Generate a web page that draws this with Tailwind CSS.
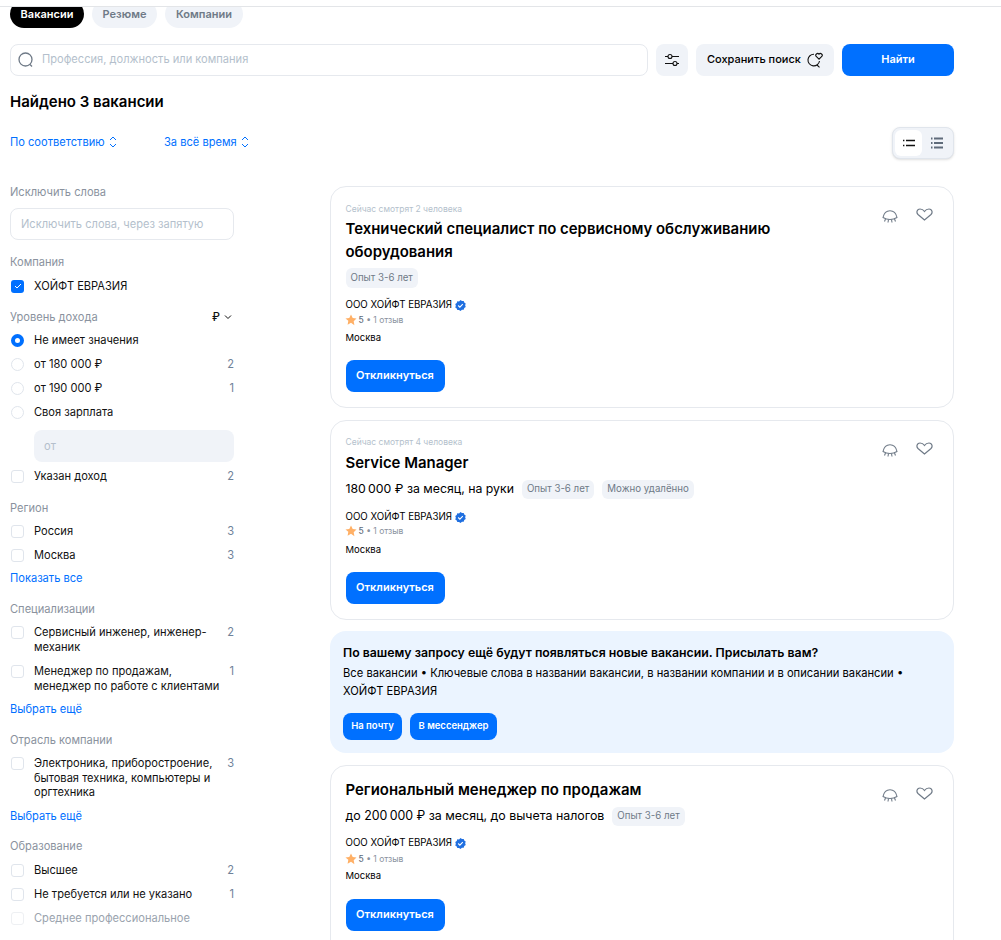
<!DOCTYPE html>
<html lang="ru">
<head>
  <meta charset="UTF-8">
  <meta name="viewport" content="width=device-width, initial-scale=1.0">
  <title>Вакансии</title>
  <script src="https://cdn.jsdelivr.net/npm/@tailwindcss/browser@4"></script>
</head>
<body class="bg-white h-[940px] overflow-hidden font-['Inter','Noto_Sans',sans-serif] text-black">
  <div class="h-[7px] border-b border-[#e3e5e8]"></div>

  <!-- Tabs, cut off by the top line -->
  <div class="h-[21px] overflow-hidden pl-[10px]">
    <div class="flex gap-2 -mt-[7px] text-[11px] font-semibold">
      <div class="h-[28px] w-[74px] rounded-full bg-black text-white flex items-center justify-center">Вакансии</div>
      <div class="h-[28px] w-[65px] rounded-full bg-[#f0f3f8] text-[#6f7a87] flex items-center justify-center">Резюме</div>
      <div class="h-[28px] w-[78px] rounded-full bg-[#f0f3f8] text-[#6f7a87] flex items-center justify-center">Компании</div>
    </div>
  </div>

  <!-- Search -->
  <div class="flex mt-4 ml-[10px] w-[944px] h-8 gap-2">
    <div class="w-[638px] rounded-lg border border-[#e6e9ee] flex items-center pl-[7px] pb-px text-[11.1px] text-[#b4bfcc]">
      <svg class="w-4 h-4 mr-2 mt-px" viewBox="0 0 16 16" fill="none" stroke="#6f7a87" stroke-width="1.3"><circle cx="7.5" cy="7.5" r="6.5"/><path d="M12 12.5l2 2"/></svg>
      Профессия, должность или компания
    </div>
    <div class="w-8 rounded-lg bg-[#f0f3f8] flex items-center justify-center">
      <svg class="w-4 h-4" viewBox="0 0 16 16" fill="none" stroke="#111" stroke-width="1.1"><path d="M1 4.5h3M8 4.5h7M1 11.5h8M13 11.5h2"/><circle cx="6" cy="4.5" r="2"/><circle cx="11" cy="11.5" r="2"/></svg>
    </div>
    <div class="w-[138px] rounded-lg bg-[#f0f3f8] flex items-center pl-[11px] pb-px text-[11px] font-medium">
      Сохранить поиск
      <svg class="w-[17px] h-4 ml-[5px] mt-px" viewBox="0 0 17 16" fill="none" stroke="#111" stroke-width="1.1"><path d="M8 2.300A5.800 5.800 0 1 0 13.500 9"/><path d="M11 13l2.500 2.300"/><path d="M13 7.200l-2.800-2.700a1.500 1.500 0 0 1 2.800-2.300 1.500 1.500 0 0 1 2.800 2.300z"/></svg>
    </div>
    <div class="w-[112px] rounded-lg bg-[#0070ff] text-white flex items-center justify-center pb-px text-[11px] font-semibold">Найти</div>
  </div>

  <h1 class="ml-[10px] mt-[15px] text-[15px] leading-[22px] font-semibold">Найдено 3 вакансии</h1>

  <!-- Sort -->
  <div class="flex items-center ml-[10px] w-[944px] h-8 mt-[14px] text-[11.1px] text-[#0070ff]">
    <div class="w-[154px] flex items-center gap-1 pb-[2px]">По соответствию
      <svg class="w-2 h-3" viewBox="0 0 8 12" fill="none" stroke="#0070ff"><path d="M1 4l3-3 3 3M1 8l3 3 3-3"/></svg>
    </div>
    <div class="flex items-center gap-1 pb-[2px]">За всё время
      <svg class="w-2 h-3" viewBox="0 0 8 12" fill="none" stroke="#0070ff"><path d="M1 4l3-3 3 3M1 8l3 3 3-3"/></svg>
    </div>
    <div class="ml-auto w-[62px] h-8 rounded-lg border border-[#e0e5ec] bg-[#f0f3f8] shadow-sm flex items-center pl-[2px]">
      <div class="w-[27px] h-[26px] rounded-md bg-white flex items-center justify-center">
        <svg class="w-3 h-2" viewBox="0 0 12 8" stroke="#111" stroke-width="1.5"><path d="M3 1.500h9M3 6.500h9M0 1.500h1.400M0 6.500h1.400"/></svg>
      </div>
      <div class="w-[29px] flex items-center justify-center">
        <svg class="w-3 h-3" viewBox="0 0 12 12" stroke="#5f6b7a" stroke-width="2"><path d="M3 1.500h9M3 6h9M3 10.500h9M0 1.500h1.500M0 6h1.500M0 10.500h1.500"/></svg>
      </div>
    </div>
  </div>

  <div class="flex items-start ml-[10px] w-[944px] mt-[25px]">
    <!-- Filters -->
    <aside class="w-[224px] shrink-0 text-[11.1px] text-[#111]">
      <div class="h-4 leading-4 text-[#8a929e]">Исключить слова</div>
      <div class="mt-2 h-8 rounded-lg border border-[#e6e9ee] flex items-center pl-[10px] text-[#b4bfcc]">Исключить слова, через запятую</div>

      <div class="mt-[14px] h-4 leading-4 text-[#8a929e]">Компания</div>
      <div class="mt-1 h-6 flex items-center">
        <div class="w-[13px] h-[13px] ml-px rounded-[3px] bg-[#0070ff] flex items-center justify-center">
          <svg class="w-2 h-2" viewBox="0 0 8 8" fill="none" stroke="#fff"><path d="M1 4l2 2 4-4"/></svg>
        </div>
        <span class="ml-[10px]">ХОЙФТ ЕВРАЗИЯ</span>
      </div>

      <div class="mt-[11px] h-4 leading-4 text-[#8a929e] flex items-center justify-between">Уровень дохода
        <span class="text-[#111] font-medium flex items-center gap-1 pr-[2px]">₽
          <svg class="w-2 h-2" viewBox="0 0 8 8" fill="none" stroke="#111"><path d="M1 2.500l3 3 3-3"/></svg>
        </span>
      </div>
      <div class="mt-[3px] h-6 flex items-center">
        <div class="w-[13px] h-[13px] ml-px rounded-full border-[4px] border-[#0070ff]"></div>
        <span class="ml-[10px]">Не имеет значения</span>
      </div>
      <div class="h-6 flex items-center">
        <div class="w-[13px] h-[13px] ml-px rounded-full border border-[#e0e5ec]"></div>
        <span class="ml-[10px]">от 180 000 ₽</span><span class="ml-auto text-[#6f8299]">2</span>
      </div>
      <div class="h-6 flex items-center">
        <div class="w-[13px] h-[13px] ml-px rounded-full border border-[#e0e5ec]"></div>
        <span class="ml-[10px]">от 190 000 ₽</span><span class="ml-auto text-[#6f8299]">1</span>
      </div>
      <div class="h-6 flex items-center">
        <div class="w-[13px] h-[13px] ml-px rounded-full border border-[#e0e5ec]"></div>
        <span class="ml-[10px]">Своя зарплата</span>
      </div>
      <div class="mt-[6px] ml-6 h-8 rounded-lg bg-[#f0f3f8] flex items-center pl-[10px] text-[#b4bfcc]">от</div>
      <div class="mt-[2px] h-6 flex items-center">
        <div class="w-[13px] h-[13px] ml-px rounded-[3px] border border-[#e0e5ec]"></div>
        <span class="ml-[10px]">Указан доход</span><span class="ml-auto text-[#6f8299]">2</span>
      </div>

      <div class="mt-3 h-4 leading-4 text-[#8a929e]">Регион</div>
      <div class="mt-[3px] h-6 flex items-center">
        <div class="w-[13px] h-[13px] ml-px rounded-[3px] border border-[#e0e5ec]"></div>
        <span class="ml-[10px]">Россия</span><span class="ml-auto text-[#6f8299]">3</span>
      </div>
      <div class="h-6 flex items-center">
        <div class="w-[13px] h-[13px] ml-px rounded-[3px] border border-[#e0e5ec]"></div>
        <span class="ml-[10px]">Москва</span><span class="ml-auto text-[#6f8299]">3</span>
      </div>
      <div class="mt-[3px] h-4 leading-4 text-[#0070ff]">Показать все</div>

      <div class="mt-[15px] h-4 leading-4 text-[#8a929e]">Специализации</div>
      <div class="mt-2 flex items-start leading-[15px]">
        <div class="w-[13px] h-[13px] mt-px ml-px rounded-[3px] border border-[#e0e5ec] shrink-0"></div>
        <span class="ml-[10px] w-[180px]">Сервисный инженер, инженер-механик</span><span class="ml-auto text-[#6f8299]">2</span>
      </div>
      <div class="mt-[9px] flex items-start leading-[15px]">
        <div class="w-[13px] h-[13px] mt-px ml-px rounded-[3px] border border-[#e0e5ec] shrink-0"></div>
        <span class="ml-[10px] w-[186px]">Менеджер по продажам, менеджер по работе с клиентами</span><span class="ml-auto text-[#6f8299]">1</span>
      </div>
      <div class="mt-[7px] h-4 leading-4 text-[#0070ff]">Выбрать ещё</div>

      <div class="mt-[15px] h-4 leading-4 text-[#8a929e]">Отрасль компании</div>
      <div class="mt-2 flex items-start leading-[14.5px]">
        <div class="w-[13px] h-[13px] mt-px ml-px rounded-[3px] border border-[#e0e5ec] shrink-0"></div>
        <span class="ml-[10px] w-[186px]">Электроника, приборостроение, бытовая техника, компьютеры и оргтехника</span><span class="ml-auto text-[#6f8299]">3</span>
      </div>
      <div class="mt-2 h-4 leading-4 text-[#0070ff]">Выбрать ещё</div>

      <div class="mt-[14px] h-4 leading-4 text-[#8a929e]">Образование</div>
      <div class="mt-[5px] h-6 flex items-center">
        <div class="w-[13px] h-[13px] ml-px rounded-[3px] border border-[#e0e5ec]"></div>
        <span class="ml-[10px]">Высшее</span><span class="ml-auto text-[#6f8299]">2</span>
      </div>
      <div class="h-6 flex items-center">
        <div class="w-[13px] h-[13px] ml-px rounded-[3px] border border-[#e0e5ec]"></div>
        <span class="ml-[10px]">Не требуется или не указано</span><span class="ml-auto text-[#6f8299]">1</span>
      </div>
      <div class="h-6 flex items-center">
        <div class="w-[13px] h-[13px] ml-px rounded-[3px] border border-[#eef0f3]"></div>
        <span class="ml-[10px] text-[#9aa3ae]">Среднее профессиональное</span>
      </div>
    </aside>

    <!-- Results -->
    <main class="w-[624px] ml-[96px] mt-[2px]">
      <article class="relative h-[222px] rounded-2xl border border-[#e6e9ee] pl-[14.5px] pr-[15px] pt-[16px]">
        <div class="text-[8.5px] leading-3 text-[#b4bfcc]">Сейчас смотрят 2 человека</div>
        <h2 class="mt-[2.5px] w-[470px] text-[14.95px] leading-[23px] font-semibold">Технический специалист по сервисному обслуживанию оборудования</h2>
        <div class="mt-[4.5px] w-fit h-[20px] px-[5px] rounded-md bg-[#f0f3f8] text-[9.7px] text-[#6f7a87] flex items-center">Опыт 3-6 лет</div>
        <div class="mt-[10px] h-[14px] flex items-center gap-[3px] text-[9.7px]">ООО ХОЙФТ ЕВРАЗИЯ
          <svg class="w-[11px] h-[11px]" viewBox="0 0 12 12"><path fill="#1f6fe0" d="M6 0l1.600 1.100 1.900-.1.600 1.800 1.600 1.100-.6 1.900.6 1.900-1.600 1.100-.6 1.800-1.900-.1L6 12l-1.600-1.100-1.900.1-.6-1.800L.3 8.100.9 6.200.3 4.300l1.600-1.100.6-1.800 1.900.1z"/><path fill="none" stroke="#fff" stroke-width="1.200" d="M3.500 6l1.800 1.800 3.200-3.300"/></svg>
        </div>
        <div class="mt-px h-[14px] flex items-center text-[8.5px] text-[#8a929e]">
          <svg class="w-3 h-3 -ml-px mr-[2px]" viewBox="0 0 12 12"><path fill="#ffb066" d="M6 .5l1.700 3.600 3.800.5-2.800 2.700.7 3.900L6 8.800l-3.400 1.900.7-3.900L.5 4.600l3.800-.5z"/></svg>
          <span class="text-[#5f6b7a] font-medium">5</span>&nbsp;• 1 отзыв
        </div>
        <div class="mt-[4px] h-[14px] leading-[14px] text-[9.5px]">Москва</div>
        <div class="mt-[15px] w-[99px] h-8 pb-[2px] rounded-lg bg-[#0070ff] text-white text-[11px] font-semibold flex items-center justify-center">Откликнуться</div>
        <div class="absolute top-[21px] right-[20px] flex items-start gap-[18px]">
          <svg class="w-4 h-[13px] mt-[2px]" viewBox="0 0 16 13" fill="none" stroke="#6f7a87" stroke-width="1.100"><path d="M1 7.500C2 3 5 .8 8 .8s6 2.200 7 6.700c-2 1.200-4.500 2-7 2s-5-.8-7-2z"/><path d="M3.500 9l-1 2.500M6.500 9.500l-.5 3M9.500 9.500l.5 3M12.500 9l1 2.500"/></svg>
          <svg class="w-[17px] h-[13px]" viewBox="0 0 17 13" fill="none" stroke="#6f7a87" stroke-width="1.200"><path d="M8.500 12L2 6.500C0 4.500 1 1 4 1c2 0 3.500 1 4.500 2.500C9.500 2 11 1 13 1c3 0 4 3.500 2 5.500z"/></svg>
        </div>
      </article>

      <article class="relative mt-3 h-[200px] rounded-2xl border border-[#e6e9ee] pl-[14.5px] pr-[15px] pt-[15px]">
        <div class="text-[8.5px] leading-3 text-[#b4bfcc]">Сейчас смотрят 4 человека</div>
        <h2 class="mt-[4px] text-[14.95px] leading-[23px] font-semibold">Service Manager</h2>
        <div class="mt-[5px] h-[19px] flex items-center text-[12.3px]">
          <span>180&thinsp;000 ₽ за месяц, на руки</span>
          <span class="ml-2 h-[19px] px-[5px] rounded-md bg-[#f0f3f8] text-[9.7px] text-[#6f7a87] flex items-center">Опыт 3-6 лет</span>
          <span class="ml-2 h-[19px] px-[5px] rounded-md bg-[#f0f3f8] text-[9.7px] text-[#6f7a87] flex items-center">Можно удалённо</span>
        </div>
        <div class="mt-[11px] h-[14px] flex items-center gap-[3px] text-[9.7px]">ООО ХОЙФТ ЕВРАЗИЯ
          <svg class="w-[11px] h-[11px]" viewBox="0 0 12 12"><path fill="#1f6fe0" d="M6 0l1.600 1.100 1.900-.1.600 1.800 1.600 1.100-.6 1.900.6 1.900-1.600 1.100-.6 1.800-1.900-.1L6 12l-1.600-1.100-1.900.1-.6-1.800L.3 8.100.9 6.200.3 4.300l1.600-1.100.6-1.800 1.900.1z"/><path fill="none" stroke="#fff" stroke-width="1.200" d="M3.500 6l1.800 1.800 3.200-3.300"/></svg>
        </div>
        <div class="h-[14px] flex items-center text-[8.5px] text-[#8a929e]">
          <svg class="w-3 h-3 -ml-px mr-[2px]" viewBox="0 0 12 12"><path fill="#ffb066" d="M6 .5l1.700 3.600 3.800.5-2.800 2.700.7 3.900L6 8.800l-3.400 1.900.7-3.900L.5 4.600l3.800-.5z"/></svg>
          <span class="text-[#5f6b7a] font-medium">5</span>&nbsp;• 1 отзыв
        </div>
        <div class="mt-[5px] h-[14px] leading-[14px] text-[9.5px]">Москва</div>
        <div class="mt-[15px] w-[99px] h-8 pb-[2px] rounded-lg bg-[#0070ff] text-white text-[11px] font-semibold flex items-center justify-center">Откликнуться</div>
        <div class="absolute top-[21px] right-[20px] flex items-start gap-[18px]">
          <svg class="w-4 h-[13px] mt-[2px]" viewBox="0 0 16 13" fill="none" stroke="#6f7a87" stroke-width="1.100"><path d="M1 7.500C2 3 5 .8 8 .8s6 2.200 7 6.700c-2 1.200-4.500 2-7 2s-5-.8-7-2z"/><path d="M3.500 9l-1 2.500M6.500 9.500l-.5 3M9.500 9.500l.5 3M12.500 9l1 2.500"/></svg>
          <svg class="w-[17px] h-[13px]" viewBox="0 0 17 13" fill="none" stroke="#6f7a87" stroke-width="1.200"><path d="M8.500 12L2 6.500C0 4.500 1 1 4 1c2 0 3.500 1 4.500 2.500C9.500 2 11 1 13 1c3 0 4 3.500 2 5.500z"/></svg>
        </div>
      </article>

      <section class="mt-[11px] h-[122px] rounded-2xl bg-[#ebf4ff] pl-[13px] pt-[13px]">
        <div class="text-[12.3px] leading-[18px] font-semibold">По вашему запросу ещё будут появляться новые вакансии. Присылать вам?</div>
        <p class="mt-[2px] w-[580px] text-[11.2px] leading-[18px]">Все вакансии • Ключевые слова в названии вакансии, в названии компании и в описании вакансии • ХОЙФТ ЕВРАЗИЯ</p>
        <div class="mt-[13px] flex gap-2 text-[9.5px] font-semibold text-white">
          <div class="w-[59px] h-[27px] rounded-lg bg-[#0070ff] flex items-center justify-center">На почту</div>
          <div class="w-[87px] h-[27px] rounded-lg bg-[#0070ff] flex items-center justify-center">В мессенджер</div>
        </div>
      </section>

      <article class="relative mt-3 h-[200px] rounded-2xl border border-[#e6e9ee] pl-[14.5px] pr-[15px] pt-[13px]">
        <h2 class="text-[14.95px] leading-[23px] font-semibold">Региональный менеджер по продажам</h2>
        <div class="mt-[5px] h-[19px] flex items-center text-[12.4px]">
          <span>до 200&thinsp;000 ₽ за месяц, до вычета налогов</span>
          <span class="ml-2 h-[19px] px-[5px] rounded-md bg-[#f0f3f8] text-[9.7px] text-[#6f7a87] flex items-center">Опыт 3-6 лет</span>
        </div>
        <div class="mt-[10px] h-[14px] flex items-center gap-[3px] text-[9.7px]">ООО ХОЙФТ ЕВРАЗИЯ
          <svg class="w-[11px] h-[11px]" viewBox="0 0 12 12"><path fill="#1f6fe0" d="M6 0l1.600 1.100 1.900-.1.600 1.800 1.600 1.100-.6 1.900.6 1.900-1.600 1.100-.6 1.800-1.900-.1L6 12l-1.600-1.100-1.900.1-.6-1.800L.3 8.100.9 6.200.3 4.300l1.600-1.100.6-1.800 1.900.1z"/><path fill="none" stroke="#fff" stroke-width="1.200" d="M3.500 6l1.800 1.800 3.200-3.300"/></svg>
        </div>
        <div class="mt-[2px] h-[14px] flex items-center text-[8.5px] text-[#8a929e]">
          <svg class="w-3 h-3 -ml-px mr-[2px]" viewBox="0 0 12 12"><path fill="#ffb066" d="M6 .5l1.700 3.600 3.800.5-2.800 2.700.7 3.900L6 8.800l-3.400 1.900.7-3.900L.5 4.600l3.800-.5z"/></svg>
          <span class="text-[#5f6b7a] font-medium">5</span>&nbsp;• 1 отзыв
        </div>
        <div class="mt-[3px] h-[14px] leading-[14px] text-[9.5px]">Москва</div>
        <div class="mt-4 w-[99px] h-8 pb-[2px] rounded-lg bg-[#0070ff] text-white text-[11px] font-semibold flex items-center justify-center">Откликнуться</div>
        <div class="absolute top-[21px] right-[20px] flex items-start gap-[18px]">
          <svg class="w-4 h-[13px] mt-[2px]" viewBox="0 0 16 13" fill="none" stroke="#6f7a87" stroke-width="1.100"><path d="M1 7.500C2 3 5 .8 8 .8s6 2.200 7 6.700c-2 1.200-4.500 2-7 2s-5-.8-7-2z"/><path d="M3.500 9l-1 2.500M6.500 9.500l-.5 3M9.500 9.500l.5 3M12.500 9l1 2.500"/></svg>
          <svg class="w-[17px] h-[13px]" viewBox="0 0 17 13" fill="none" stroke="#6f7a87" stroke-width="1.200"><path d="M8.500 12L2 6.500C0 4.500 1 1 4 1c2 0 3.500 1 4.500 2.500C9.500 2 11 1 13 1c3 0 4 3.500 2 5.500z"/></svg>
        </div>
      </article>
    </main>
  </div>
</body>
</html>
